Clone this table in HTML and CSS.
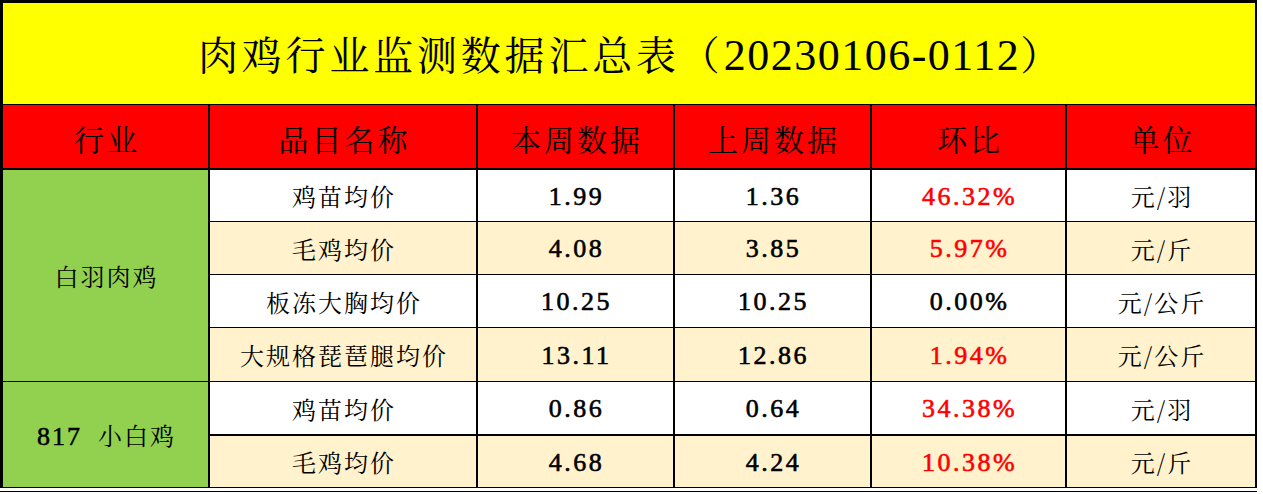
FILE: index.html
```html
<!DOCTYPE html>
<html lang="zh-CN">
<head>
<meta charset="utf-8">
<title>肉鸡行业监测数据汇总表</title>
<link rel="stylesheet" href="styles.css">
</head>
<body>
<div class="sheet">
  <div class="title"><span>肉鸡行业监测数据汇总表（<span class="lat">20230106-0112</span>）</span></div>

  <div class="hd">行业</div>
  <div class="hd">品目名称</div>
  <div class="hd">本周数据</div>
  <div class="hd">上周数据</div>
  <div class="hd">环比</div>
  <div class="hd">单位</div>

  <div class="group g1">白羽肉鸡</div>
  <div class="c">鸡苗均价</div><div class="c num">1.99</div><div class="c num">1.36</div><div class="c num up">46.32%</div><div class="c">元/羽</div>
  <div class="c alt">毛鸡均价</div><div class="c alt num">4.08</div><div class="c alt num">3.85</div><div class="c alt num up">5.97%</div><div class="c alt">元/斤</div>
  <div class="c">板冻大胸均价</div><div class="c num">10.25</div><div class="c num">10.25</div><div class="c num">0.00%</div><div class="c">元/公斤</div>
  <div class="c alt">大规格琵琶腿均价</div><div class="c alt num">13.11</div><div class="c alt num">12.86</div><div class="c alt num up">1.94%</div><div class="c alt">元/公斤</div>

  <div class="group g2"><span><span class="lat">817</span><span class="sp"></span>小白鸡</span></div>
  <div class="c thick">鸡苗均价</div><div class="c thick num">0.86</div><div class="c thick num">0.64</div><div class="c thick num up">34.38%</div><div class="c thick">元/羽</div>
  <div class="c alt">毛鸡均价</div><div class="c alt num">4.68</div><div class="c alt num">4.24</div><div class="c alt num up">10.38%</div><div class="c alt">元/斤</div>
</div>
<div class="tail"></div>
</body>
</html>
```

FILE: styles.css
```css
html, body {
  margin: 0;
  padding: 0;
  background: #ffffff;
}

body {
  font-family: "Noto Serif CJK SC", "Noto Sans CJK SC", sans-serif;
  color: #000000;
}

.lat,
.num {
  font-family: "Liberation Serif", "Times New Roman", "DejaVu Serif", serif;
}

.sheet {
  display: grid;
  grid-template-columns: 205px 266px 195px 195px 193px 188px;
  grid-template-rows: 101px 64px 51px 52px 52px 53px 53px 51px;
  column-gap: 2px;
  row-gap: 1px;
  width: fit-content;
  background: #000000;
  padding: 3px 2px 1px 3px;
}

.title {
  grid-column: 1 / -1;
  background: #ffff00;
  display: flex;
  align-items: center;
  justify-content: center;
  font-size: 40px;
  letter-spacing: 3.8px;
  padding-left: 4px;
  padding-bottom: 2px;
}

.title .lat {
  font-size: 44px;
  letter-spacing: 1.5px;
}

.hd {
  background: #ff0000;
  margin-bottom: 1px;
  display: flex;
  align-items: center;
  justify-content: center;
  font-size: 30px;
  letter-spacing: 3px;
  padding-left: 3px;
  padding-top: 3px;
}

.group {
  background: #92d050;
  display: flex;
  align-items: center;
  justify-content: center;
  font-size: 24px;
  letter-spacing: 2px;
  padding-left: 2px;
}

.group .lat {
  font-size: 26px;
  -webkit-text-stroke: 0.5px #000000;
}

.sp {
  display: inline-block;
  width: 16px;
}

.g1 {
  grid-row: 3 / span 4;
}

.g2 {
  grid-row: 7 / span 2;
}

.c {
  background: #ffffff;
  display: flex;
  align-items: center;
  justify-content: center;
  font-size: 24px;
  letter-spacing: 2px;
  padding-left: 2px;
}

.c.alt {
  background: #fff2cc;
}

.c.thick {
  margin-bottom: 1px;
}

.num {
  font-size: 26px;
  letter-spacing: 2.5px;
  padding-top: 2px;
  -webkit-text-stroke: 0.6px #000000;
}

.up {
  color: #ff0000;
  -webkit-text-stroke: 0.6px #ff0000;
}

.tail {
  width: 1257px;
  height: 1px;
  margin-top: 3px;
  background: #000000;
}
```
